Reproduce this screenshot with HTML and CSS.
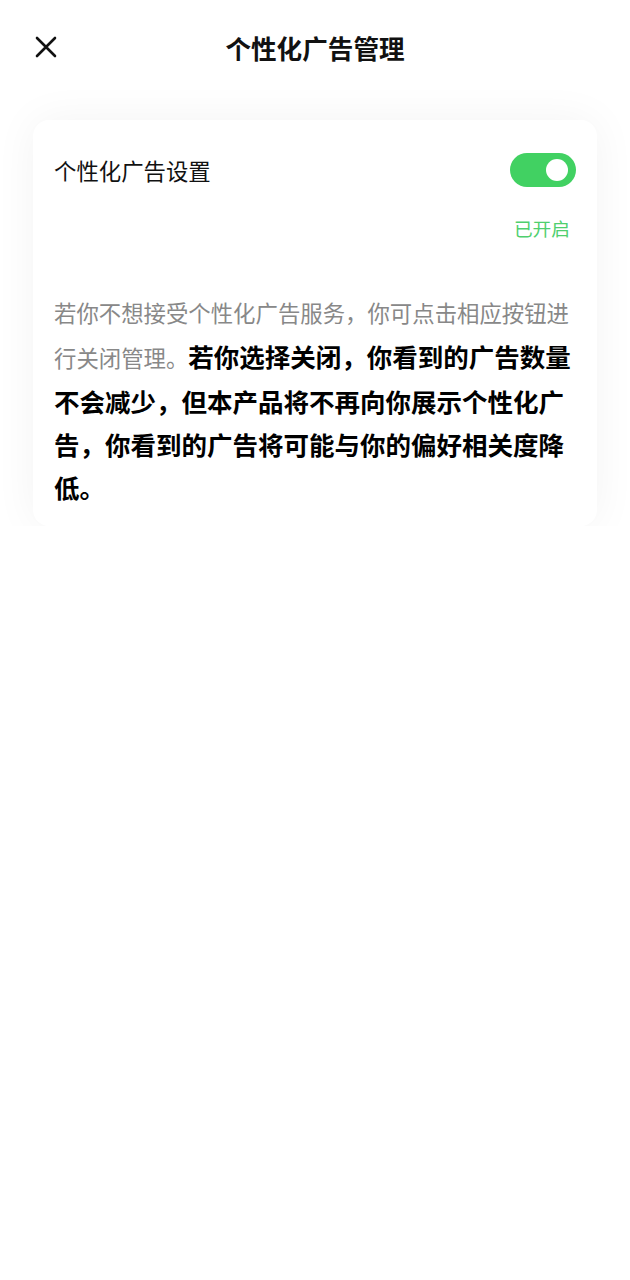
FILE: index.html
```html
<!DOCTYPE html>
<html lang="zh-CN">
<head>
    <meta charset="UTF-8">
    <meta name="viewport" content="width=device-width, initial-scale=1.0">
    <title>个性化广告管理</title>
    <link rel="stylesheet" href="styles.css">
</head>
<body>

    <div class="header">
        <button class="close-btn" aria-label="关闭">
            <svg width="24" height="24" viewBox="0 0 24 24">
                <path d="M3 3 L21 21 M21 3 L3 21" stroke="#111" stroke-width="2.6" stroke-linecap="round" fill="none"/>
            </svg>
        </button>
        <h1>个性化广告管理</h1>
    </div>

    <div class="card">
        <div class="setting-row">
            <span class="setting-label">个性化广告设置</span>
            <div class="toggle on"><span class="knob"></span></div>
        </div>
        <div class="status">已开启</div>
        <p class="desc"><span class="muted">若你不想接受个性化广告服务，你可点击相应按钮进行关闭管理。</span><b>若你选择关闭，你看到的广告数量不会减少，但本产品将不再向你展示个性化广告，你看到的广告将可能与你的偏好相关度降低。</b></p>
    </div>

</body>
</html>
```

FILE: styles.css
```css
body {
    margin: 0;
    background: #fff;
    font-family: "Noto Sans CJK SC", "Noto Sans", sans-serif;
    color: #111;
}
.header {
    position: relative;
    height: 96px;
    display: flex;
    align-items: center;
    justify-content: center;
}
.header h1 {
    margin: 0;
    font-size: 25.6px;
    font-weight: bold;
    line-height: 1;
}
.close-btn {
    position: absolute;
    left: 34px;
    top: 35px;
    padding: 0;
    border: none;
    background: none;
    width: 24px;
    height: 24px;
}
.card {
    margin: 24px 33px 0;
    padding: 33px 21px 18px;
    background: #fff;
    border-radius: 16px;
    box-shadow: 0 0 44px rgba(0, 0, 0, 0.05);
}
.setting-row {
    display: flex;
    align-items: center;
    justify-content: space-between;
}
.setting-label {
    font-size: 22.4px;
    line-height: 34px;
}
.toggle {
    width: 66px;
    height: 34px;
    border-radius: 17px;
    background: #41d162;
    position: relative;
}
.knob {
    position: absolute;
    right: 8px;
    top: 6px;
    width: 22px;
    height: 22px;
    border-radius: 50%;
    background: #fff;
}
.status {
    margin-top: 29px;
    padding-right: 6px;
    text-align: right;
    font-size: 18.7px;
    line-height: 24px;
    color: #4fcf6e;
}
.desc {
    margin: 49px 0 0;
    font-size: 25.5px;
    line-height: 43px;
}
.muted {
    font-size: 22.4px;
    color: #888;
}
.desc b {
    color: #000;
}
```
